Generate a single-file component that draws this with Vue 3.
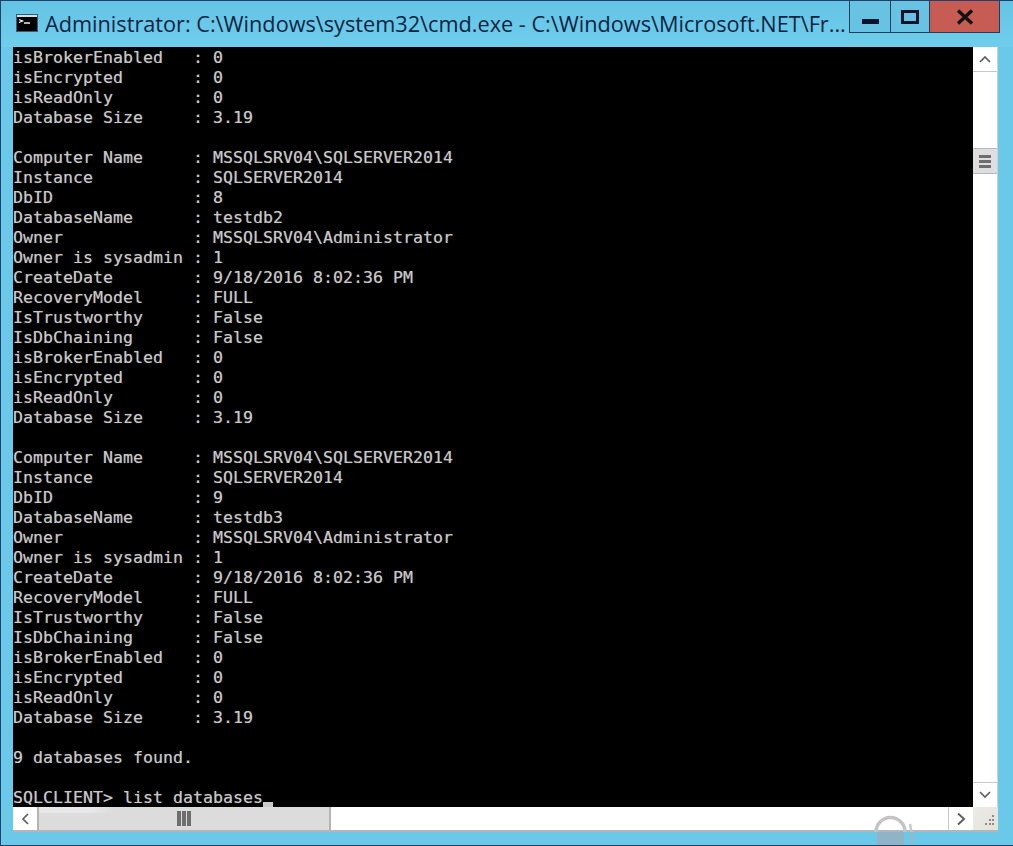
<script setup>
const tail = (size = '3.19') => [
  'isBrokerEnabled   : 0',
  'isEncrypted       : 0',
  'isReadOnly        : 0',
  'Database Size     : ' + size,
]
const record = (id, name) => [
  'Computer Name     : MSSQLSRV04\\SQLSERVER2014',
  'Instance          : SQLSERVER2014',
  'DbID              : ' + id,
  'DatabaseName      : ' + name,
  'Owner             : MSSQLSRV04\\Administrator',
  'Owner is sysadmin : 1',
  'CreateDate        : 9/18/2016 8:02:36 PM',
  'RecoveryModel     : FULL',
  'IsTrustworthy     : False',
  'IsDbChaining      : False',
  ...tail(),
]
const lines = [
  ...tail(), '',
  ...record(8, 'testdb2'), '',
  ...record(9, 'testdb3'), '',
  '9 databases found.', '',
].join('\n')
</script>

<template>
  <div class="window">
    <header class="titlebar">
      <svg class="appicon" width="22" height="18" viewBox="0 0 22 18">
        <rect x="0.5" y="0.5" width="21" height="17" fill="#000" stroke="#2f5f78" />
        <rect x="1" y="1" width="20" height="2" fill="#d5dfe4" />
        <path d="M3 5.5l3.5 1.5L3 8.5" fill="none" stroke="#fff" stroke-width="1.3" />
        <path d="M8 9h6" stroke="#fff" stroke-width="1.4" />
      </svg>
      <span class="title">Administrator: C:\Windows\system32\cmd.exe - C:\Windows\Microsoft.NET\Fr...</span>
      <div class="controls">
        <div class="ctl min"><span class="min-glyph"></span></div>
        <div class="ctl max"><span class="max-glyph"></span></div>
        <div class="ctl close">
          <svg width="18" height="16" viewBox="0 0 18 16">
            <path d="M2 1.5l14 13M16 1.5l-14 13" stroke="#111" stroke-width="3.4" />
          </svg>
        </div>
      </div>
    </header>
    <div class="client">
      <div class="console">
        <pre class="text">{{ lines }}
SQLCLIENT&gt; list databases<span class="cursor"></span></pre>
      </div>
      <div class="vbar">
        <div class="arrow">
          <svg width="14" height="10" viewBox="0 0 14 10"><path d="M2 8l5-5 5 5" fill="none" stroke="#606060" stroke-width="1.7" /></svg>
        </div>
        <div class="vspace top"></div>
        <div class="vthumb">
          <span class="vgrip"></span><span class="vgrip"></span><span class="vgrip"></span>
        </div>
        <div class="vspace rest"></div>
        <div class="arrow down">
          <svg width="14" height="10" viewBox="0 0 14 10"><path d="M2 2l5 5 5-5" fill="none" stroke="#606060" stroke-width="1.7" /></svg>
        </div>
      </div>
      <div class="hbar">
        <div class="harrow">
          <svg width="10" height="14" viewBox="0 0 10 14"><path d="M8 2L3 7l5 5" fill="none" stroke="#606060" stroke-width="1.7" /></svg>
        </div>
        <div class="hthumb">
          <span class="hgrip"></span><span class="hgrip"></span><span class="hgrip"></span>
        </div>
        <div class="hspace"></div>
        <div class="harrow right">
          <svg width="12" height="14" viewBox="0 0 12 14"><path d="M3 1.5L9 7l-6 5.5" fill="none" stroke="#606060" stroke-width="2" /></svg>
        </div>
      </div>
      <div class="corner">
        <svg width="16" height="16" viewBox="0 0 16 16" fill="#8c8c8c">
          <rect x="12" y="2" width="2" height="2" />
          <rect x="9" y="6" width="2" height="2" /><rect x="12" y="6" width="2" height="2" />
          <rect x="5" y="10" width="2" height="2" /><rect x="9" y="10" width="2" height="2" /><rect x="12" y="10" width="2" height="2" />
        </svg>
      </div>
    </div>
    <svg class="ghost" width="50" height="32" viewBox="0 0 50 32">
      <rect x="7" y="17" width="27" height="15" fill="#90b4c5" />
      <path d="M6 17A14.5 14.5 0 0 1 35 17" fill="none" stroke="#c4c4c4" stroke-width="3.5" />
      <path d="M40 9l1.5 8" stroke="#c8c8c8" stroke-width="2.5" />
      <path d="M41.5 17v15" stroke="#8fbbcd" stroke-width="3" />
    </svg>
  </div>
</template>

<style>
html, body { margin: 0; background: #6ac6e6; }
</style>

<style scoped>
.window {
  position: relative;
  width: 1013px;
  height: 846px;
  box-sizing: border-box;
  background: #6ac8e8;
  border: 1px solid #24406a;
  border-right-width: 0;
  overflow: hidden;
}
.titlebar {
  display: flex;
  align-items: flex-start;
  height: 46px;
  padding-left: 15px;
  background: linear-gradient(#64c4e4, #70cdec);
}
.appicon { margin-top: 13px; flex: none; }
.title {
  margin-left: 7px;
  margin-top: 7px;
  font-family: "Open Sans", "Noto Sans", sans-serif;
  font-size: 21.7px;
  line-height: 32px;
  color: #0a2442;
  white-space: nowrap;
  width: 803px;
  overflow: hidden;
  flex: none;
}
.controls { display: flex; height: 32px; margin-left: 1px; margin-top: -1px; }
.ctl {
  box-sizing: border-box;
  height: 33px;
  border: 1px solid #1f3f5f;
  border-top-color: #24406a;
  display: flex;
  align-items: center;
  justify-content: center;
  background: #68c3e2;
}
.min { width: 42px; }
.max { width: 39px; border-left: 0; }
.close { width: 70px; border-left: 0; background: #c75c55; }
.min-glyph { width: 17px; height: 5px; background: #05142c; margin-top: 9px; }
.max-glyph { width: 18px; height: 14px; box-sizing: border-box; border: 3.5px solid #05142c; }

.client {
  display: grid;
  grid-template-columns: 960px 25px;
  grid-template-rows: 760px 25px;
  margin-left: 12px;
}
.console { background: #000; overflow: hidden; }
.text {
  margin: 0;
  padding-top: 1px;
  font-family: "DejaVu Sans Mono", "Liberation Mono", monospace;
  font-size: 16.61px;
  line-height: 20px;
  color: #c8c8c8;
  text-shadow: 0 0 1px rgba(200, 200, 200, 0.55);
}
.cursor {
  display: inline-block;
  width: 10px;
  height: 5px;
  background: #c9c9c9;
  vertical-align: -4px;
}

.vbar { display: flex; flex-direction: column; background: #fff; border-right: 1px solid #d0d0d0; box-sizing: border-box; }
.arrow {
  height: 25px;
  box-sizing: border-box;
  display: flex;
  align-items: center;
  justify-content: center;
  border-bottom: 1px solid #c8c8c8;
  flex: none;
}
.arrow.down { border-bottom: 0; border-top: 1px solid #c8c8c8; }
.vspace.top { height: 76px; flex: none; }
.vspace.rest { flex: 1; }
.vthumb {
  height: 26px;
  flex: none;
  box-sizing: border-box;
  background: #dedede;
  border-top: 1px solid #b8b8b8;
  border-bottom: 1px solid #b8b8b8;
  display: flex;
  flex-direction: column;
  align-items: center;
  justify-content: center;
  gap: 2px;
}
.vgrip { width: 12px; height: 3px; background: #6e6e6e; }

.hbar { display: flex; background: #fff; border-bottom: 2px solid #b0b6ba; box-sizing: border-box; }
.harrow {
  width: 26px;
  flex: none;
  display: flex;
  align-items: center;
  justify-content: center;
  box-sizing: border-box;
  background: #fff;
  border-right: 2px solid #b4b4b4;
}
.harrow.right { border-right: 0; border-left: 1px solid #c8c8c8; width: 25px; }
.hthumb {
  width: 292px;
  flex: none;
  box-sizing: border-box;
  background: linear-gradient(90deg, rgba(255,255,255,.3), rgba(255,255,255,.3) 18%, rgba(255,255,255,0) 26%) top / 100% 6px no-repeat, #dcdcdc;
  border-right: 2px solid #b4b4b4;
  display: flex;
  align-items: center;
  justify-content: center;
  gap: 1px;
}
.hgrip { width: 4px; height: 15px; background: #6e6e6e; }
.hspace { flex: 1; }
.corner {
  background: linear-gradient(135deg, #ebebe7, #e4e2da);
  border-bottom: 2px solid #b0b6ba;
  display: flex;
  align-items: flex-end;
  justify-content: flex-end;
  padding: 0 2px 1px 0;
  box-sizing: border-box;
}
.ghost { position: absolute; left: 869px; top: 814px; }
</style>
